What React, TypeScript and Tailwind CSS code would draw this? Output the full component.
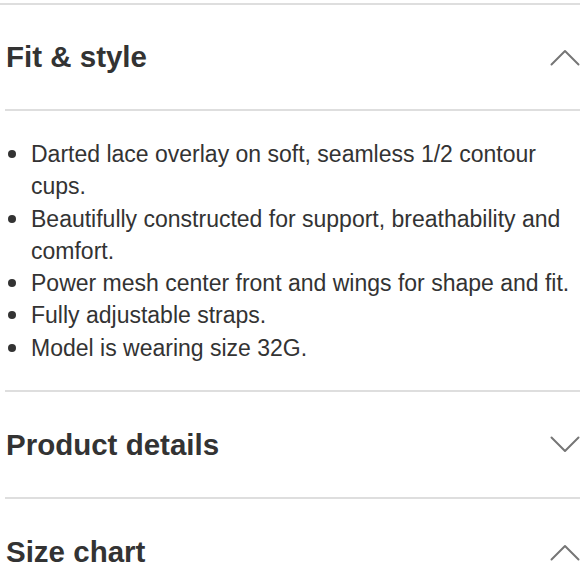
import React from "react"

const bullets = [
  "Darted lace overlay on soft, seamless 1/2 contour cups.",
  "Beautifully constructed for support, breathability and comfort.",
  "Power mesh center front and wings for shape and fit.",
  "Fully adjustable straps.",
  "Model is wearing size 32G.",
]

function Chevron({ up }: { up: boolean }) {
  return (
    <svg width="30" height="17" viewBox="0 0 30 17" fill="none" aria-hidden="true">
      <path
        d={up ? "M1.5 15.5 L15 2 L28.5 15.5" : "M1.5 1.5 L15 15 L28.5 1.5"}
        stroke="#767676"
        strokeWidth="2"
        strokeLinecap="round"
        strokeLinejoin="round"
      />
    </svg>
  )
}

function Heading({ title, open, height }: { title: string; open: boolean; height: string }) {
  return (
    <button type="button" className={`w-full flex items-center justify-between pl-[1px] ${height}`}>
      <span className="text-[29.5px] font-bold text-[#333333] leading-none">{title}</span>
      <Chevron up={open} />
    </button>
  )
}

export default function App() {
  return (
    <div className="w-[580px] h-[580px] overflow-hidden bg-white font-['Liberation_Sans',Arial,sans-serif]">
      <div className="mt-[3px] h-[2px] bg-[#dedede]" />
      <div className="ml-[5px]">
        <Heading title="Fit & style" open height="h-[104px]" />
        <div className="h-[2px] bg-[#dedede]" />
        <ul className="pt-[27px] pb-[26px] text-[23px] leading-[32.3px] text-[#333333]">
          {bullets.map((b) => (
            <li key={b} className="flex">
              <span className="w-[26px] shrink-0 flex justify-start items-start pt-[12px] pl-[3px]">
                <span className="w-[8px] h-[8px] rounded-full bg-[#333333]" />
              </span>
              <span>{b}</span>
            </li>
          ))}
        </ul>
        <div className="h-[2px] bg-[#dedede]" />
        <Heading title="Product details" open={false} height="h-[105px]" />
        <div className="h-[2px] bg-[#dedede]" />
        <Heading title="Size chart" open height="h-[106px]" />
      </div>
    </div>
  )
}
